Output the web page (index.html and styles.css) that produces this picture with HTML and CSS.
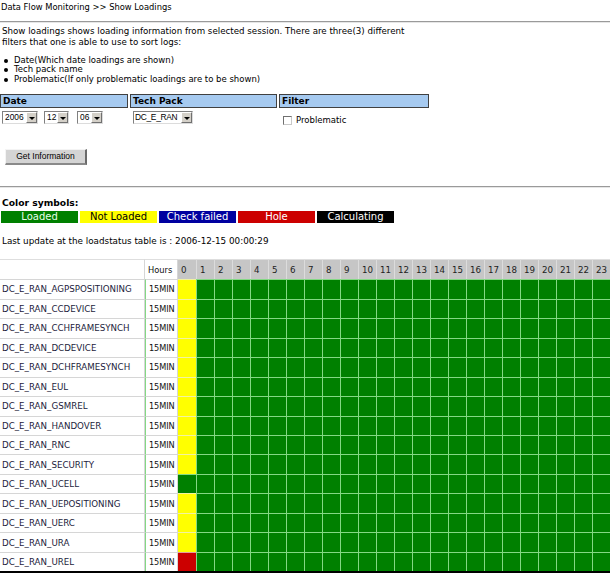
FILE: index.html
```html
<!DOCTYPE html>
<html>
<head>
<meta charset="utf-8">
<link rel="stylesheet" href="styles.css">
</head>
<body>
<div class="title">Data Flow Monitoring &gt;&gt; Show Loadings</div>
<div class="rule"></div>
<p class="intro">Show loadings shows loading information from selected session. There are three(3) different<br>filters that one is able to use to sort logs:</p>
<ul class="bullets">
  <li>Date(Which date loadings are shown)</li>
  <li>Tech pack name</li>
  <li>Problematic(If only problematic loadings are to be shown)</li>
</ul>

<div class="filters">
  <div class="fhead">Date</div>
  <div class="fhead">Tech Pack</div>
  <div class="fhead">Filter</div>
  <div class="fcell dates">
    <span class="select w35"><span class="val">2006</span><span class="arrow"></span></span>
    <span class="select w24"><span class="val">12</span><span class="arrow"></span></span>
    <span class="select w25"><span class="val">06</span><span class="arrow"></span></span>
  </div>
  <div class="fcell tp">
    <span class="select w59"><span class="val">DC_E_RAN</span><span class="arrow"></span></span>
  </div>
  <div class="fcell flt">
    <span class="check"></span><span class="chklabel">Problematic</span>
  </div>
</div>

<div class="btnrow"><span class="button">Get Information</span></div>
<div class="rule rule2"></div>

<div class="symtitle">Color symbols:</div>
<div class="legend">
  <span class="sym loaded">Loaded</span>
  <span class="sym notloaded">Not Loaded</span>
  <span class="sym checkfailed">Check failed</span>
  <span class="sym hole">Hole</span>
  <span class="sym calc">Calculating</span>
</div>
<div class="lastupd">Last update at the loadstatus table is : 2006-12-15 00:00:29</div>

<table class="grid">
  <colgroup>
    <col class="cname"><col class="chrs">
    <col class="ch"><col class="ch"><col class="ch"><col class="ch"><col class="ch"><col class="ch"><col class="ch"><col class="ch"><col class="ch"><col class="ch"><col class="ch"><col class="ch"><col class="ch"><col class="ch"><col class="ch"><col class="ch"><col class="ch"><col class="ch"><col class="ch"><col class="ch"><col class="ch"><col class="ch"><col class="ch"><col class="ch">
  </colgroup>
  <thead>
    <tr class="hrow">
      <th class="corner"></th><th class="hrs">Hours</th>
      <th class="h">0</th><th class="h">1</th><th class="h">2</th><th class="h">3</th><th class="h">4</th><th class="h">5</th><th class="h">6</th><th class="h">7</th><th class="h">8</th><th class="h">9</th><th class="h">10</th><th class="h">11</th><th class="h">12</th><th class="h">13</th><th class="h">14</th><th class="h">15</th><th class="h">16</th><th class="h">17</th><th class="h">18</th><th class="h">19</th><th class="h">20</th><th class="h">21</th><th class="h">22</th><th class="h">23</th>
    </tr>
  </thead>
  <tbody>
    <tr><th class="name">DC_E_RAN_AGPSPOSITIONING</th><td class="hrs">15MIN</td><td class="y"></td><td></td><td></td><td></td><td></td><td></td><td></td><td></td><td></td><td></td><td></td><td></td><td></td><td></td><td></td><td></td><td></td><td></td><td></td><td></td><td></td><td></td><td></td><td></td></tr>
    <tr><th class="name">DC_E_RAN_CCDEVICE</th><td class="hrs">15MIN</td><td class="y"></td><td></td><td></td><td></td><td></td><td></td><td></td><td></td><td></td><td></td><td></td><td></td><td></td><td></td><td></td><td></td><td></td><td></td><td></td><td></td><td></td><td></td><td></td><td></td></tr>
    <tr><th class="name">DC_E_RAN_CCHFRAMESYNCH</th><td class="hrs">15MIN</td><td class="y"></td><td></td><td></td><td></td><td></td><td></td><td></td><td></td><td></td><td></td><td></td><td></td><td></td><td></td><td></td><td></td><td></td><td></td><td></td><td></td><td></td><td></td><td></td><td></td></tr>
    <tr><th class="name">DC_E_RAN_DCDEVICE</th><td class="hrs">15MIN</td><td class="y"></td><td></td><td></td><td></td><td></td><td></td><td></td><td></td><td></td><td></td><td></td><td></td><td></td><td></td><td></td><td></td><td></td><td></td><td></td><td></td><td></td><td></td><td></td><td></td></tr>
    <tr><th class="name">DC_E_RAN_DCHFRAMESYNCH</th><td class="hrs">15MIN</td><td class="y"></td><td></td><td></td><td></td><td></td><td></td><td></td><td></td><td></td><td></td><td></td><td></td><td></td><td></td><td></td><td></td><td></td><td></td><td></td><td></td><td></td><td></td><td></td><td></td></tr>
    <tr><th class="name">DC_E_RAN_EUL</th><td class="hrs">15MIN</td><td class="y"></td><td></td><td></td><td></td><td></td><td></td><td></td><td></td><td></td><td></td><td></td><td></td><td></td><td></td><td></td><td></td><td></td><td></td><td></td><td></td><td></td><td></td><td></td><td></td></tr>
    <tr><th class="name">DC_E_RAN_GSMREL</th><td class="hrs">15MIN</td><td class="y"></td><td></td><td></td><td></td><td></td><td></td><td></td><td></td><td></td><td></td><td></td><td></td><td></td><td></td><td></td><td></td><td></td><td></td><td></td><td></td><td></td><td></td><td></td><td></td></tr>
    <tr><th class="name">DC_E_RAN_HANDOVER</th><td class="hrs">15MIN</td><td class="y"></td><td></td><td></td><td></td><td></td><td></td><td></td><td></td><td></td><td></td><td></td><td></td><td></td><td></td><td></td><td></td><td></td><td></td><td></td><td></td><td></td><td></td><td></td><td></td></tr>
    <tr><th class="name">DC_E_RAN_RNC</th><td class="hrs">15MIN</td><td class="y"></td><td></td><td></td><td></td><td></td><td></td><td></td><td></td><td></td><td></td><td></td><td></td><td></td><td></td><td></td><td></td><td></td><td></td><td></td><td></td><td></td><td></td><td></td><td></td></tr>
    <tr><th class="name">DC_E_RAN_SECURITY</th><td class="hrs">15MIN</td><td class="y"></td><td></td><td></td><td></td><td></td><td></td><td></td><td></td><td></td><td></td><td></td><td></td><td></td><td></td><td></td><td></td><td></td><td></td><td></td><td></td><td></td><td></td><td></td><td></td></tr>
    <tr><th class="name">DC_E_RAN_UCELL</th><td class="hrs">15MIN</td><td></td><td></td><td></td><td></td><td></td><td></td><td></td><td></td><td></td><td></td><td></td><td></td><td></td><td></td><td></td><td></td><td></td><td></td><td></td><td></td><td></td><td></td><td></td><td></td></tr>
    <tr><th class="name">DC_E_RAN_UEPOSITIONING</th><td class="hrs">15MIN</td><td class="y"></td><td></td><td></td><td></td><td></td><td></td><td></td><td></td><td></td><td></td><td></td><td></td><td></td><td></td><td></td><td></td><td></td><td></td><td></td><td></td><td></td><td></td><td></td><td></td></tr>
    <tr><th class="name">DC_E_RAN_UERC</th><td class="hrs">15MIN</td><td class="y"></td><td></td><td></td><td></td><td></td><td></td><td></td><td></td><td></td><td></td><td></td><td></td><td></td><td></td><td></td><td></td><td></td><td></td><td></td><td></td><td></td><td></td><td></td><td></td></tr>
    <tr><th class="name">DC_E_RAN_URA</th><td class="hrs">15MIN</td><td class="y"></td><td></td><td></td><td></td><td></td><td></td><td></td><td></td><td></td><td></td><td></td><td></td><td></td><td></td><td></td><td></td><td></td><td></td><td></td><td></td><td></td><td></td><td></td><td></td></tr>
    <tr><th class="name">DC_E_RAN_UREL</th><td class="hrs">15MIN</td><td class="r"></td><td></td><td></td><td></td><td></td><td></td><td></td><td></td><td></td><td></td><td></td><td></td><td></td><td></td><td></td><td></td><td></td><td></td><td></td><td></td><td></td><td></td><td></td><td></td></tr>
  </tbody>
</table>
<div class="bottomline"></div>
</body>
</html>
```

FILE: styles.css
```css
html, body {
  margin: 0;
  padding: 0;
  background: #ffffff;
}
body {
  font-family: "DejaVu Sans", Verdana, sans-serif;
  font-size: 8.5px;
  color: #000;
  overflow: hidden;
}

.title {
  height: 21px;
  line-height: 15px;
  padding-left: 1px;
  font-size: 8.35px;
}
.rule {
  height: 0;
  border-top: 1px solid #9a9a9a;
  border-bottom: 1px solid #e6e6e6;
}
.intro {
  margin: 3px 0 0;
  padding-left: 2px;
  line-height: 11px;
  font-size: 8.7px;
}
.bullets {
  margin: 8px 0 0;
  padding-left: 14px;
  line-height: 9.4px;
  list-style: none;
}
.bullets li {
  position: relative;
}
.bullets li::before {
  content: "";
  position: absolute;
  left: -10px;
  top: 3px;
  width: 4px;
  height: 4px;
  border-radius: 50%;
  background: #000;
}

/* filters */
.filters {
  margin-top: 10px;
  display: grid;
  grid-template-columns: 128px 147px 150px;
  column-gap: 2px;
}
.fhead {
  height: 12px;
  line-height: 12px;
  background: #a6caf0;
  border: 1px solid #404040;
  padding-left: 2px;
  font-weight: bold;
  font-size: 9px;
  color: #000;
}
.fcell {
  margin-top: 3px;
  display: flex;
  align-items: flex-start;
  height: 16px;
}
.dates { padding-left: 2px; gap: 6px; }
.dates .w24 { margin-right: 2px; }
.tp { padding-left: 3px; }
.flt { padding-left: 4px; }

.select {
  display: flex;
  height: 13px;
  box-sizing: border-box;
  border-top: 1px solid #808080;
  border-left: 1px solid #808080;
  border-bottom: 1px solid #dcdcdc;
  border-right: 1px solid #dcdcdc;
  background: #fff;
  font-family: "Liberation Sans", Arial, sans-serif;
  font-size: 8.4px;
  line-height: 11px;
}
.select .val {
  flex: 1;
  padding-left: 2px;
  overflow: hidden;
  white-space: nowrap;
}
.w59 .val {
  padding-left: 1px;
  letter-spacing: -0.3px;
}
.select .arrow {
  width: 11px;
  flex: none;
  box-sizing: border-box;
  background: #d4d0c8;
  border-top: 1px solid #fff;
  border-left: 1px solid #fff;
  border-right: 1px solid #707070;
  border-bottom: 1px solid #707070;
  position: relative;
}
.select .arrow::after {
  content: "";
  position: absolute;
  left: 2px;
  top: 4px;
  border-left: 3px solid transparent;
  border-right: 3px solid transparent;
  border-top: 3px solid #000;
}
.w35 { width: 36px; }
.w24 { width: 25px; }
.w25 { width: 26px; }
.w59 { width: 60px; }

.check {
  display: inline-block;
  width: 9px;
  height: 9px;
  box-sizing: border-box;
  margin-top: 5px;
  border-top: 1px solid #707070;
  border-left: 1px solid #707070;
  border-right: 1px solid #c8c8c8;
  border-bottom: 1px solid #c8c8c8;
  background: #fff;
}
.chklabel {
  margin-left: 4px;
  margin-top: 4px;
  line-height: 11px;
}

.btnrow {
  margin-top: 22px;
  padding-left: 5px;
  height: 37px;
}
.button {
  display: inline-block;
  width: 82px;
  height: 16px;
  box-sizing: border-box;
  background: #d4d4d4;
  border-top: 1px solid #f4f4f4;
  border-left: 1px solid #f4f4f4;
  border-right: 2px solid #6a6a6a;
  border-bottom: 2px solid #8a8a8a;
  text-align: center;
  font-family: "Liberation Sans", Arial, sans-serif;
  font-size: 8.5px;
  line-height: 13px;
  color: #000;
}

.symtitle {
  margin-top: 9px;
  padding-left: 2px;
  font-weight: bold;
  font-size: 9.2px;
  line-height: 12px;
}
.legend {
  margin-top: 2px;
  padding-left: 1px;
  display: flex;
  gap: 2px;
}
.sym {
  width: 77px;
  height: 12px;
  line-height: 12px;
  text-align: center;
  font-size: 10px;
  color: #fff;
}
.loaded { background: #008000; color: #e8ffe8; }
.notloaded { background: #ffff00; color: #000; }
.checkfailed { background: #0000a0; }
.hole { background: #cc0000; }
.calc { background: #000; }

.lastupd {
  margin-top: 12px;
  padding-left: 2px;
  line-height: 12px;
  font-size: 8.8px;
}

/* grid */
.grid {
  margin-top: 12px;
  width: 610px;
  table-layout: fixed;
  border-collapse: separate;
  border-spacing: 0;
  font-size: 8.7px;
}
.cname { width: 145px; }
.chrs { width: 33px; }
.ch { width: 18px; }

.grid th, .grid td {
  padding: 0;
  box-sizing: border-box;
  white-space: nowrap;
  overflow: hidden;
}
.hrow { height: 20px; }
.hrow th {
  font-weight: normal;
  text-align: left;
  border-top: 1px solid #dedede;
}
.hrow .corner {
  border-right: 1px solid #d6d6d6;
}
.hrow .hrs {
  padding-left: 3px;
  border-right: 1px solid #d6d6d6;
  color: #111;
  font-size: 8.3px;
}
.hrow .h {
  background: #c6c6c6;
  border-left: 1px solid #dcdcdc;
  padding-left: 3px;
  color: #222;
}
.hrow .h:nth-child(3) { border-left: none; }

.grid tbody tr { height: 19.47px; }
.grid tbody th.name {
  font-weight: normal;
  text-align: left;
  padding-left: 2px;
  color: #1c1c3c;
  border-top: 1px solid #d6d6d6;
  border-right: 1px solid #d6d6d6;
  background: #fff;
}
.grid tbody td.hrs {
  padding-left: 3px;
  color: #111;
  font-size: 8.2px;
  letter-spacing: -0.1px;
  border-top: 1px solid #d6d6d6;
  border-right: 1px solid #d6d6d6;
  background: #fff;
}
.grid tbody td {
  background: #008000;
  border-top: 1px solid #84d884;
  border-left: 1px solid #84d884;
}
.grid tbody td.y {
  background: #ffff00;
  border-left: none;
  border-top: 1px solid #f2f2a0;
}
.grid tbody td.r {
  background: #cc0000;
  border-left: none;
  border-top: 1px solid #e0a0a0;
}
.grid tbody td.hrs + td:not(.y):not(.r) {
  border-left: none;
}
.bottomline {
  height: 2px;
  background: #000;
}
```
